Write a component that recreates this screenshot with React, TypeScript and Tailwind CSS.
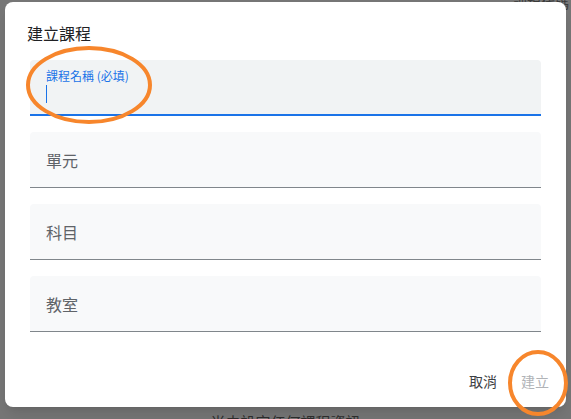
import React from 'react';

const font = { fontFamily: '"Noto Sans CJK TC", "Noto Sans", Roboto, sans-serif' };

const Field: React.FC<{ label: string }> = ({ label }) => (
  <div className="h-[56px] bg-[#f8f9fa] rounded-t-[4px] border-b border-[#80868b] flex items-center px-[16px]">
    <span className="text-[16px] text-[#5f6368]">{label}</span>
  </div>
);

const App: React.FC = () => {
  return (
    <div className="relative w-[571px] h-[419px] overflow-hidden bg-[#767676]" style={font}>
      {/* page text behind the overlay */}
      <div className="absolute top-[-8px] right-[2px] text-[14px] text-[#3a3a3a]">課程代碼</div>
      <div className="absolute top-[411px] left-0 w-full text-center text-[15px] text-[#2e2e2e]">
        尚未設定任何課程資訊
      </div>

      <div className="relative ml-[5px] mt-[2px] w-[561px] h-[405px] bg-white rounded-lg shadow-lg flex flex-col">
        <div className="px-[22px] pt-[19px] text-[16px] leading-[24px] text-[#202124]">建立課程</div>

        <div className="px-[25px] pt-[15px] flex flex-col gap-[16px]">
          <div className="h-[56px] bg-[#f1f3f4] rounded-t-[4px] border-b-2 border-[#1a73e8] px-[16px] pt-[8px]">
            <div className="text-[12px] leading-[16px] text-[#1a73e8]">課程名稱 (必填)</div>
            <div className="mt-[1px] w-px h-[18px] bg-[#1a73e8]" />
          </div>
          <Field label="單元" />
          <Field label="科目" />
          <Field label="教室" />
        </div>

        <div className="mt-auto flex justify-end items-center gap-[8px] pr-[9px] pb-[8px]">
          <button className="h-[36px] px-[8px] text-[14px] text-[#3c4043]">取消</button>
          <button className="h-[36px] px-[8px] text-[14px] text-[#b0b3b7]">建立</button>
        </div>
      </div>

      {/* hand-drawn highlight marks */}
      <svg className="absolute inset-0 pointer-events-none" width="571" height="419">
        <ellipse cx="89" cy="85" rx="61" ry="37" fill="none" stroke="#f7862c" strokeWidth="4" />
        <ellipse cx="538" cy="383" rx="28" ry="31" fill="none" stroke="#f7862c" strokeWidth="4" />
      </svg>
    </div>
  );
};

export default App;
